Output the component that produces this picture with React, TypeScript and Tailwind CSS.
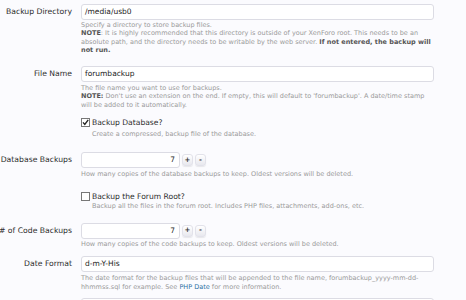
import { useState } from "react";

function Label({ text }: { text: string }) {
  return (
    <div className="flex w-[72px] shrink-0 justify-end whitespace-nowrap text-[7.7px] leading-[16px] text-[#2d2d2d]">
      <span>{text}</span>
    </div>
  );
}

function Desc({ children, className = "" }: { children: React.ReactNode; className?: string }) {
  return (
    <div className={"text-[6.5px] leading-[8.3px] text-[#9a9a9a] " + className}>
      {children}
    </div>
  );
}

function TextBox({ value }: { value: string }) {
  return (
    <div className="h-[16px] w-[353px] rounded-[3px] border border-[#dcdce4] bg-white px-[3px] text-[7.5px] leading-[14px] text-[#222]">
      {value}
    </div>
  );
}

function Spinner({ value }: { value: number }) {
  return (
    <div className="flex items-center gap-[2px]">
      <div className="h-[16px] w-[99px] rounded-[3px] border border-[#dcdce4] bg-white px-[4px] text-right text-[7.5px] leading-[14px] text-[#222]">
        {value}
      </div>
      <button className="flex h-[12px] w-[11px] items-center justify-center rounded-[3px] border border-[#e2e2ea] bg-gradient-to-b from-white to-[#e8e8ee] text-[7px] font-bold leading-none text-[#333] shadow-[0_1px_1px_rgba(0,0,0,0.08)]">
        +
      </button>
      <button className="flex h-[12px] w-[11px] items-center justify-center rounded-[3px] border border-[#e2e2ea] bg-gradient-to-b from-white to-[#e8e8ee] text-[7px] font-bold leading-none text-[#333] shadow-[0_1px_1px_rgba(0,0,0,0.08)]">
        -
      </button>
    </div>
  );
}

function Check({ checked, label }: { checked: boolean; label: string }) {
  return (
    <div className="flex items-center gap-[2px] text-[7.6px] leading-[11px] text-[#2d2d2d]">
      <span className="flex h-[9px] w-[9px] items-center justify-center border border-[#777] bg-white">
        {checked && (
          <svg width="7" height="7" viewBox="0 0 7 7">
            <path d="M1 3.4 L2.8 5.4 L6.2 0.8" stroke="#222" strokeWidth="1.4" fill="none" />
          </svg>
        )}
      </span>
      {label}
    </div>
  );
}

export default function App() {
  const [dbCount] = useState(7);
  const [codeCount] = useState(7);

  return (
    <div
      className="h-[300px] w-[466px] overflow-hidden bg-[#fbfbfe] pt-[4px]"
      style={{ fontFamily: '"DejaVu Sans", Verdana, sans-serif' }}
    >
      {/* backup directory */}
      <div className="flex gap-[9px]">
        <Label text="Backup Directory" />
        <div>
          <TextBox value="/media/usb0" />
          <Desc className="mt-[1px] w-[353px]">
            Specify a directory to store backup files.
            <br />
            <b className="text-[#555]">NOTE</b>: It is highly recommended that this directory is outside of your XenForo root. This needs to be an absolute path, and the directory needs to be writable by the web server.{" "}
            <b className="text-[#555]">If not entered, the backup will not run.</b>
          </Desc>
        </div>
      </div>

      {/* file name */}
      <div className="mt-[12px] flex gap-[9px]">
        <Label text="File Name" />
        <div>
          <TextBox value="forumbackup" />
          <Desc className="mt-[2px] w-[353px]">
            The file name you want to use for backups.
            <br />
            <b className="text-[#555]">NOTE:</b> Don't use an extension on the end. If empty, this will default to 'forumbackup'. A date/time stamp will be added to it automatically.
          </Desc>
        </div>
      </div>

      {/* backup database */}
      <div className="mt-[8px] flex gap-[9px]">
        <div className="w-[72px] shrink-0" />
        <div>
          <Check checked label="Backup Database?" />
          <Desc className="ml-[11px] mt-[2px]">Create a compressed, backup file of the database.</Desc>
        </div>
      </div>

      <div className="mt-[14px] flex gap-[9px]">
        <Label text="# of Database Backups" />
        <div>
          <Spinner value={dbCount} />
          <Desc className="mt-[2px]">How many copies of the database backups to keep. Oldest versions will be deleted.</Desc>
        </div>
      </div>

      {/* forum root */}
      <div className="mt-[12px] flex gap-[9px]">
        <div className="w-[72px] shrink-0" />
        <div>
          <Check checked={false} label="Backup the Forum Root?" />
          <Desc className="ml-[11px]">Backup all the files in the forum root. Includes PHP files, attachments, add-ons, etc.</Desc>
        </div>
      </div>

      <div className="mt-[13px] flex gap-[9px]">
        <Label text="# of Code Backups" />
        <div>
          <Spinner value={codeCount} />
          <Desc className="mt-[1px]">How many copies of the code backups to keep. Oldest versions will be deleted.</Desc>
        </div>
      </div>

      <div className="mt-[8px] flex gap-[9px]">
        <Label text="Date Format" />
        <div>
          <TextBox value="d-m-Y-His" />
          <Desc className="mt-[2px] w-[353px]">
            The date format for the backup files that will be appended to the file name, forumbackup_yyyy-mm-dd-hhmmss.sql for example. See <span className="text-[#2c6fa3]">PHP Date</span> for more information.
          </Desc>
        </div>
      </div>

      <div className="mt-[7px] flex gap-[9px]">
        <div className="w-[72px] shrink-0" />
        <TextBox value="" />
      </div>
    </div>
  );
}
